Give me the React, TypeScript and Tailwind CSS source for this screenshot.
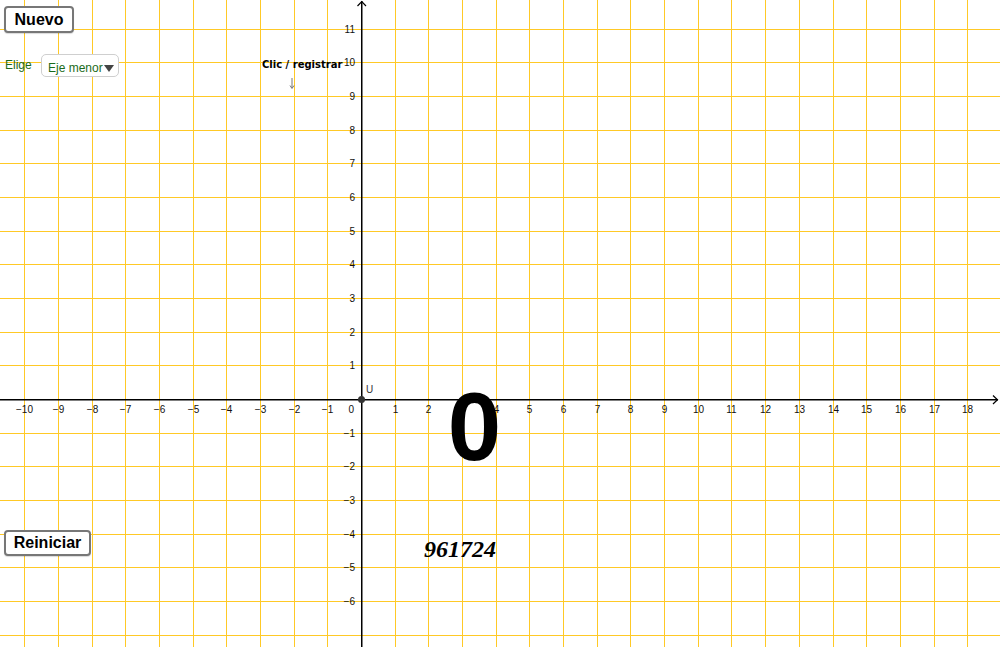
import React from "react";

const OX = 361.5;
const OY = 399.5;
const UNIT = 33.68;
const px = (k: number) => Math.floor(OX + UNIT * k) + 0.5;
const py = (k: number) => Math.floor(OY - UNIT * k) + 0.5;

const xs: number[] = [];
for (let k = -10; k <= 18; k++) xs.push(k);
const ys: number[] = [];
for (let k = -7; k <= 11; k++) ys.push(k);

const fmt = (k: number) => (k < 0 ? "\u2212" + Math.abs(k) : String(k));

function Graph() {
  return (
    <svg width={1000} height={647} viewBox="0 0 1000 647" className="block">
      <rect x={0} y={0} width={1000} height={647} fill="#ffffff" />
      {xs.map((k) =>
        k === 0 ? null : (
          <line key={"gx" + k} x1={px(k)} y1={0} x2={px(k)} y2={647} stroke="#ffc926" strokeWidth={1} />
        )
      )}
      {ys.map((k) =>
        k === 0 ? null : (
          <line key={"gy" + k} x1={0} y1={py(k)} x2={1000} y2={py(k)} stroke="#ffc926" strokeWidth={1} />
        )
      )}
      {/* axes */}
      <line x1={0} y1={399.75} x2={998} y2={399.75} stroke="#000" strokeWidth={1.5} />
      <line x1={361.75} y1={1} x2={361.75} y2={647} stroke="#000" strokeWidth={1.5} />
      <polyline points="357.5,6 361.75,1.5 366,6" fill="none" stroke="#000" strokeWidth={1.2} />
      <polyline points="993,395.5 997.5,399.75 993,404" fill="none" stroke="#000" strokeWidth={1.2} />
      {/* labels */}
      <g fontFamily="'Liberation Sans', Arial, sans-serif" fontSize={10} fill="#111">
        {xs.map((k) =>
          k === 0 ? null : (
            <text key={"lx" + k} x={px(k)} y={413} textAnchor="middle">
              {fmt(k)}
            </text>
          )
        )}
        <text x={354} y={413} textAnchor="end">
          0
        </text>
        {ys.map((k) =>
          k === 0 || k < -6 ? null : (
            <text key={"ly" + k} x={355} y={py(k) + 3.5} textAnchor="end">
              {fmt(k)}
            </text>
          )
        )}
      </g>
      {/* point U */}
      <circle cx={361.5} cy={399.5} r={3.5} fill="#333" />
      <text x={366} y={393} fontFamily="'Liberation Sans', Arial, sans-serif" fontSize={10} fill="#333">
        U
      </text>
      {/* big zero */}
      <text
        x={474.5}
        y={460}
        textAnchor="middle"
        fontFamily="'Liberation Sans', Arial, sans-serif"
        fontWeight="bold"
        fontSize={96}
        fill="#000"
      >
        0
      </text>
      <text
        x={424}
        y={557}
        fontFamily="'Liberation Serif', 'Times New Roman', serif"
        fontWeight="bold"
        fontStyle="italic"
        fontSize={24}
        fill="#000"
      >
        961724
      </text>
    </svg>
  );
}

export default function App() {
  return (
    <div className="relative w-[1000px] h-[647px] overflow-hidden bg-white" style={{ fontFamily: "'Liberation Sans', Arial, sans-serif" }}>
      <Graph />
      <button className="absolute left-[4px] top-[6px] w-[70px] h-[27px] rounded-[4px] border-2 border-[#777] bg-white text-[16px] font-bold leading-none text-black flex items-center justify-center shadow-[0_1px_1px_rgba(0,0,0,0.15)]">
        Nuevo
      </button>
      <button className="absolute left-[4px] top-[530px] w-[87px] h-[26px] rounded-[4px] border-2 border-[#777] bg-white text-[16px] font-bold leading-none text-black flex items-center justify-center shadow-[0_1px_1px_rgba(0,0,0,0.15)]">
        Reiniciar
      </button>
      <div className="absolute left-[5px] top-[59px] text-[12px] leading-[12px] text-[#1b6b1b]">Elige</div>
      <div className="absolute left-[41px] top-[54px] w-[78px] h-[23px] rounded-[5px] border border-[#cfcfcf] bg-white flex items-start pl-[6px] pt-[6.5px]">
        <span className="text-[12px] leading-[12px] text-[#1b6b1b]">Eje menor</span>
        <svg width={10} height={7} viewBox="0 0 10 7" className="ml-[1px] mt-[3px]">
          <polygon points="0,0 10,0 5,7" fill="#444" />
        </svg>
      </div>
      <div
        className="absolute left-[262px] top-[59px] text-[10px] leading-[12px] font-bold text-black"
        style={{ fontFamily: "'DejaVu Sans', sans-serif" }}
      >
        Clic / registrar
      </div>
      <svg width={6} height={11} viewBox="0 0 6 11" className="absolute left-[289px] top-[78px]">
        <line x1={3} y1={0} x2={3} y2={10} stroke="#777" strokeWidth={1} />
        <polyline points="1,7.5 3,10.5 5,7.5" fill="none" stroke="#777" strokeWidth={1} />
      </svg>
    </div>
  );
}
